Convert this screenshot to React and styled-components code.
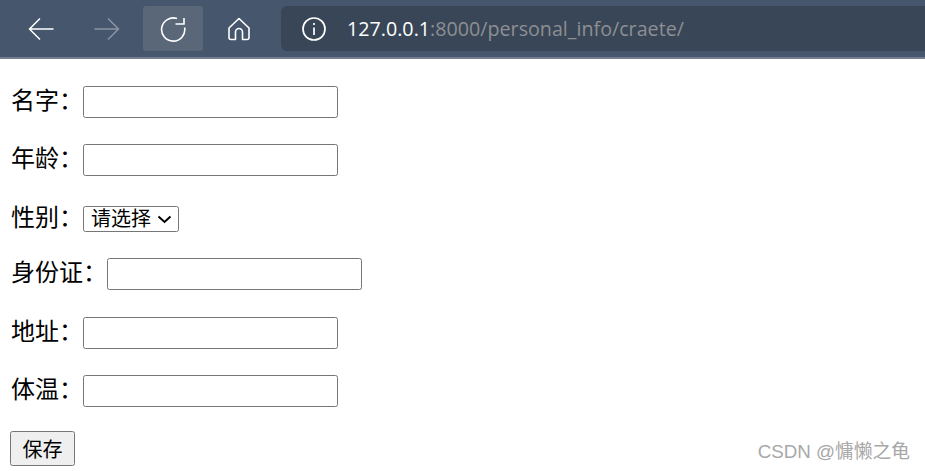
import React from "react";
import styled, { createGlobalStyle } from "styled-components";

const Global = createGlobalStyle`
  html, body {
    margin: 0;
    padding: 0;
    background: #fff;
    overflow: hidden;
  }
`;

const Page = styled.div`
  position: relative;
  width: 925px;
  height: 471px;
  overflow: hidden;
  font-family: "Liberation Sans", "Noto Sans CJK SC", sans-serif;
  color: #000;
`;

const Toolbar = styled.div`
  display: flex;
  align-items: center;
  height: 57px;
  padding-left: 11px;
  background: #46566c;
  border-bottom: 2px solid #76818f;
`;

const NavButton = styled.div`
  flex: none;
  display: flex;
  align-items: center;
  justify-content: center;
  width: ${(p) => p.$w}px;
  height: 45px;
  border-radius: 3px;
  background: ${(p) => (p.$active ? "#5a6778" : "transparent")};
  margin-right: ${(p) => p.$mr || 0}px;
`;

const AddressBar = styled.div`
  flex: 1;
  display: flex;
  align-items: center;
  height: 45px;
  padding-left: 21px;
  border-radius: 6px 0 0 6px;
  background: #394657;
`;

const Url = styled.div`
  margin-left: 21px;
  font-family: "Open Sans", "Noto Sans", sans-serif;
  font-size: 19.7px;
  color: #8d8f92;
  white-space: nowrap;
  span {
    color: #fff;
  }
`;

const Form = styled.form`
  display: flex;
  flex-direction: column;
  align-items: flex-start;
  padding: 27px 0 0 10px;
`;

const Row = styled.div`
  display: flex;
  align-items: center;
  margin-top: ${(p) => p.$top || 0}px;
`;

const Label = styled.label`
  padding: 0 0 2px 1px;
  font-size: 24px;
  line-height: 24px;
  white-space: nowrap;
`;

const TextInput = styled.input`
  width: 255px;
  height: 32px;
  box-sizing: border-box;
  margin: 0;
  padding: 0 3px;
  background: #fff;
  border: 1px solid #767676;
  border-radius: 2.5px;
`;

const chevron =
  "url(\"data:image/svg+xml,%3Csvg xmlns='http://www.w3.org/2000/svg' width='15' height='9'%3E%3Cpath d='M1.5 1.5L7.5 7L13.5 1.5' fill='none' stroke='%23000' stroke-width='2'/%3E%3C/svg%3E\")";

const Select = styled.select`
  appearance: none;
  width: 96px;
  height: 26px;
  box-sizing: border-box;
  margin: 0;
  padding: 0 0 0 7px;
  font-family: inherit;
  font-size: 20px;
  color: #000;
  background: #fff ${chevron} no-repeat 73px 8px;
  border: 1px solid #767676;
  border-radius: 2.5px;
`;

const SaveButton = styled.button`
  width: 65px;
  height: 35px;
  box-sizing: border-box;
  margin: 0;
  padding: 0;
  font-family: inherit;
  font-size: 20px;
  color: #000;
  background: #efefef;
  border: 1px solid #767676;
  border-radius: 2.5px;
`;

const Watermark = styled.div`
  position: absolute;
  right: 15px;
  bottom: 7px;
  font-size: 18.75px;
  line-height: 24px;
  color: #a8a8a8;
  white-space: nowrap;
`;

const Back = () => (
  <svg width="26" height="24" viewBox="0 0 26 24" fill="none" stroke="#fff" strokeWidth="1.5">
    <path d="M1.5 12H25.5M12 1.5L1.5 12L12 22.5" />
  </svg>
);

const Forward = () => (
  <svg width="26" height="24" viewBox="0 0 26 24" fill="none" stroke="#8b94a1" strokeWidth="1.5">
    <path d="M0.5 12H24.5M14 1.5L24.5 12L14 22.5" />
  </svg>
);

const Reload = () => (
  <svg width="26" height="26" viewBox="0 0 26 26" fill="none" stroke="#fff" strokeWidth="1.6">
    <path d="M24.6 11.5A11.6 11.6 0 1 1 17 2.6" />
    <path d="M15.5 8H24V2" />
  </svg>
);

const Home = () => (
  <svg width="24" height="24" viewBox="0 0 24 24" fill="none" stroke="#fff" strokeWidth="1.6" strokeLinejoin="round">
    <path d="M12 1.5L22 11V20.5A2 2 0 0 1 20 22.5H15.5V15A3.5 3.5 0 0 0 8.5 15V22.5H4A2 2 0 0 1 2 20.5V11Z" />
  </svg>
);

const Info = () => (
  <svg width="24" height="24" viewBox="0 0 24 24" fill="none" stroke="#fff" strokeWidth="1.7">
    <circle cx="12" cy="12" r="11" />
    <path d="M12 10.5V18M12 6V8" />
  </svg>
);

const fields = [
  { label: "名字：", top: 0 },
  { label: "年龄：", top: 26 },
  { label: "性别：", top: 30, select: true },
  { label: "身份证：", top: 26 },
  { label: "地址：", top: 27 },
  { label: "体温：", top: 26 },
];

export default function App() {
  return (
    <Page>
      <Global />
      <Toolbar>
        <NavButton $w={60} $mr={6}>
          <Back />
        </NavButton>
        <NavButton $w={60} $mr={6}>
          <Forward />
        </NavButton>
        <NavButton $w={60} $active>
          <Reload />
        </NavButton>
        <NavButton $w={72} $mr={6}>
          <Home />
        </NavButton>
        <AddressBar>
          <Info />
          <Url>
            <span>127.0.0.1</span>:8000/personal_info/craete/
          </Url>
        </AddressBar>
      </Toolbar>
      <Form>
        {fields.map((f) => (
          <Row key={f.label} $top={f.top}>
            <Label>{f.label}</Label>
            {f.select ? (
              <Select defaultValue="">
                <option value="">请选择</option>
              </Select>
            ) : (
              <TextInput type="text" />
            )}
          </Row>
        ))}
        <Row $top={24}>
          <SaveButton type="button">保存</SaveButton>
        </Row>
      </Form>
      <Watermark>CSDN @慵懒之龟</Watermark>
    </Page>
  );
}
